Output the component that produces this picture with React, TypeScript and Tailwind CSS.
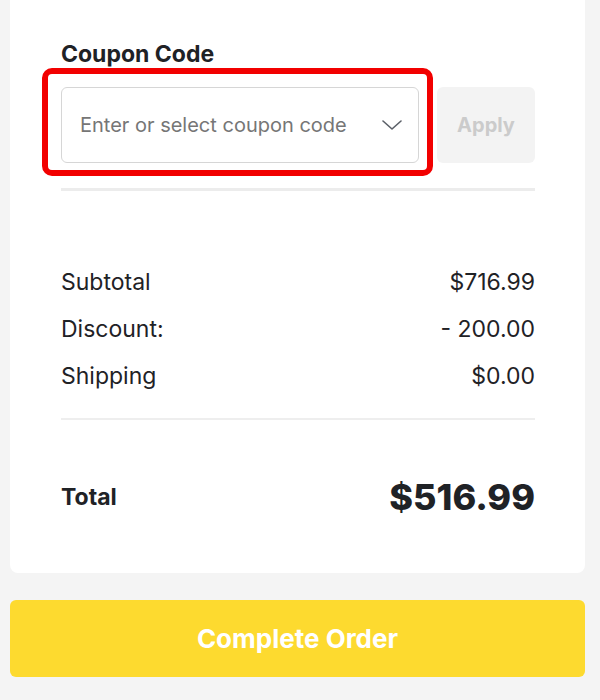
const rows = [
  { label: "Subtotal", value: "$716.99" },
  { label: "Discount:", value: "- 200.00" },
  { label: "Shipping", value: "$0.00" },
];

export default function App() {
  return (
    <div className="min-h-screen bg-[#f4f4f4] pl-[10px] pr-[15px] pb-6 font-['Inter','Liberation_Sans',sans-serif] text-[#1f2226]">
      <div className="rounded-b-lg bg-white pl-[51px] pr-[50px] pt-[40px] pb-[54px]">
        <h3 className="text-[23px] font-bold leading-[28px]">Coupon Code</h3>

        <div className="mt-[19px] flex items-stretch gap-[18px]">
          <div className="relative flex-1">
            <button className="flex h-[76px] w-full items-center justify-between rounded-md border border-[#d6d6d6] bg-white pl-[18px] pr-[16px] text-left">
              <span className="text-[20px] text-[#767676]">Enter or select coupon code</span>
              <svg viewBox="0 0 20 10" className="h-[10px] w-[20px]" fill="none" stroke="#5b6068" strokeWidth="1.6" strokeLinecap="round" strokeLinejoin="round">
                <path d="M1 1l9 8 9-8" />
              </svg>
            </button>
            {/* highlight annotation */}
            <div className="pointer-events-none absolute -top-[19px] -bottom-[13px] -left-[19px] -right-[14px] rounded-[10px] border-[6px] border-[#f20000]" />
          </div>
          <button className="w-[98px] rounded-md bg-[#f3f3f3] text-[20px] font-bold text-[#cbcbcb]">Apply</button>
        </div>

        <div className="mt-[25px] h-[3px] bg-[#ececec]" />

        <div className="mt-[76px] flex flex-col gap-[17px]">
          {rows.map((row) => (
            <div key={row.label} className="flex justify-between text-[23px] leading-[30px]">
              <span>{row.label}</span>
              <span>{row.value}</span>
            </div>
          ))}
        </div>

        <div className="mt-[27px] h-[2px] bg-[#eeeeee]" />

        <div className="mt-[55px] flex items-center justify-between">
          <span className="text-[23px] font-bold">Total</span>
          <span className="text-[36px] leading-[44px] font-extrabold">$516.99</span>
        </div>
      </div>

      <button className="mt-[27px] h-[77px] w-full rounded-md bg-[#fdda2f] text-[26px] font-bold text-white">
        Complete Order
      </button>
    </div>
  );
}
